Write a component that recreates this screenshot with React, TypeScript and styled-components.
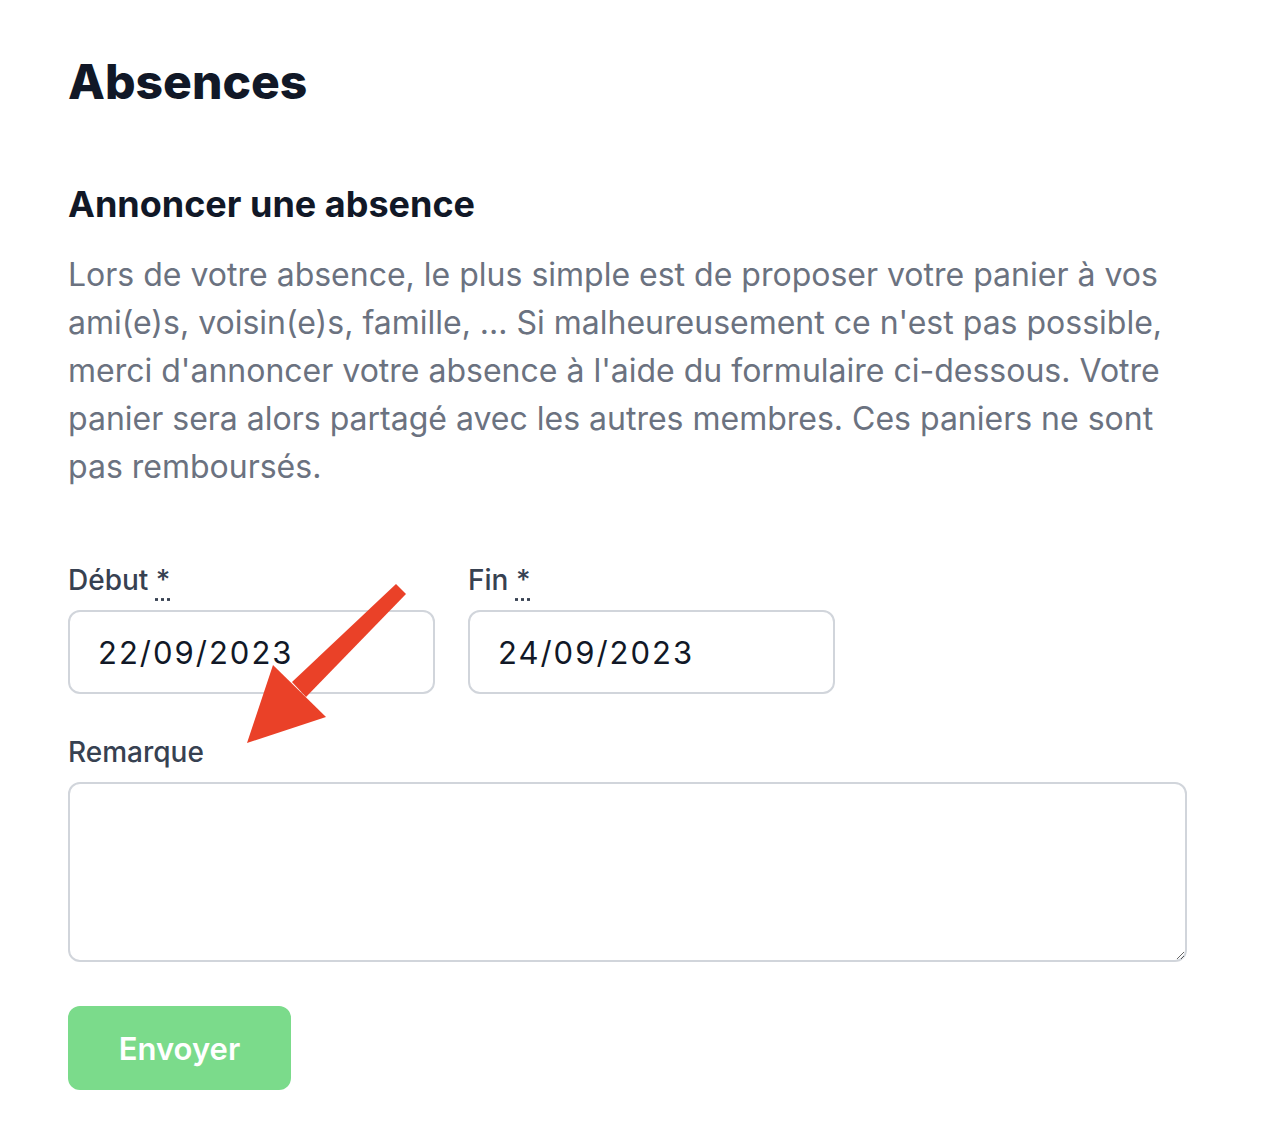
import { createGlobalStyle, styled } from 'styled-components';

const GlobalStyle = createGlobalStyle`
  html, body {
    margin: 0;
    padding: 0;
    background: #ffffff;
  }
  body {
    font-family: Inter, "Noto Sans", sans-serif;
    color: #111827;
  }
  * {
    box-sizing: border-box;
  }
`;

const Page = styled.div`
  position: relative;
  padding: 52px 75px 40px 68px;
`;

const Title = styled.h1`
  margin: 0;
  font-size: 48px;
  line-height: 60px;
  font-weight: 800;
  color: #111827;
`;

const SectionTitle = styled.h2`
  margin: 68px 0 0;
  font-size: 36px;
  line-height: 48px;
  font-weight: 700;
  color: #111827;
`;

const Intro = styled.p`
  margin: 23px 0 0;
  font-size: 32px;
  line-height: 48px;
  color: #6b7280;
`;

const Form = styled.form`
  display: flex;
  flex-direction: column;
  margin-top: 69px;
`;

const DateRow = styled.div`
  display: flex;
  gap: 33px;
`;

const Field = styled.label<{ $wide?: boolean }>`
  display: flex;
  flex-direction: column;
  gap: 10px;
  width: ${({ $wide }) => ($wide ? '100%' : '367px')};
`;

const LabelText = styled.span`
  font-size: 28px;
  line-height: 40px;
  font-weight: 500;
  color: #374151;
`;

const Required = styled.abbr`
  text-decoration: underline dotted;
  text-underline-offset: 8px;
  cursor: help;
`;

const DateInput = styled.input`
  height: 84px;
  width: 100%;
  padding: 0 28px;
  border: 2px solid #d1d5db;
  border-radius: 12px;
  font-family: Inter, "Noto Sans", sans-serif;
  font-size: 31px;
  letter-spacing: 2px;
  color: #111827;
  background: #ffffff;
  outline: none;
`;

const RemarkField = styled(Field)`
  margin-top: 38px;
`;

const TextArea = styled.textarea`
  height: 180px;
  width: 100%;
  padding: 20px 28px;
  border: 2px solid #d1d5db;
  border-radius: 12px;
  font-family: Inter, "Noto Sans", sans-serif;
  font-size: 31px;
  resize: vertical;
  outline: none;
`;

const SubmitButton = styled.button`
  align-self: flex-start;
  margin-top: 44px;
  width: 223px;
  height: 84px;
  border: none;
  border-radius: 12px;
  background: #7bdb8b;
  color: #ffffff;
  font-family: Inter, "Noto Sans", sans-serif;
  font-size: 31px;
  font-weight: 600;
  cursor: not-allowed;
`;

const Annotation = styled.svg`
  position: absolute;
  left: 0;
  top: 0;
  pointer-events: none;
`;

const App = () => {
  return (
    <Page>
      <GlobalStyle />
      <Title>Absences</Title>
      <SectionTitle>Annoncer une absence</SectionTitle>
      <Intro>
        Lors de votre absence, le plus simple est de proposer votre panier à vos
        ami(e)s, voisin(e)s, famille, ... Si malheureusement ce n'est pas
        possible, merci d'annoncer votre absence à l'aide du formulaire
        ci-dessous. Votre panier sera alors partagé avec les autres membres. Ces
        paniers ne sont pas remboursés.
      </Intro>
      <Form onSubmit={(e) => e.preventDefault()}>
        <DateRow>
          <Field>
            <LabelText>
              Début <Required title="requis">*</Required>
            </LabelText>
            <DateInput readOnly value="22/09/2023" />
          </Field>
          <Field>
            <LabelText>
              Fin <Required title="requis">*</Required>
            </LabelText>
            <DateInput readOnly value="24/09/2023" />
          </Field>
        </DateRow>
        <RemarkField $wide>
          <LabelText>Remarque</LabelText>
          <TextArea />
        </RemarkField>
        <SubmitButton type="submit">Envoyer</SubmitButton>
      </Form>
      {/* red arrow pointing at the remark field */}
      <Annotation width="1262" height="1148" viewBox="0 0 1262 1148">
        <polygon points="396,584 406,594 306,697 292,682" fill="#ea4128" />
        <polygon points="273,665 326,717 247,743" fill="#ea4128" />
      </Annotation>
    </Page>
  );
};

export default App;
